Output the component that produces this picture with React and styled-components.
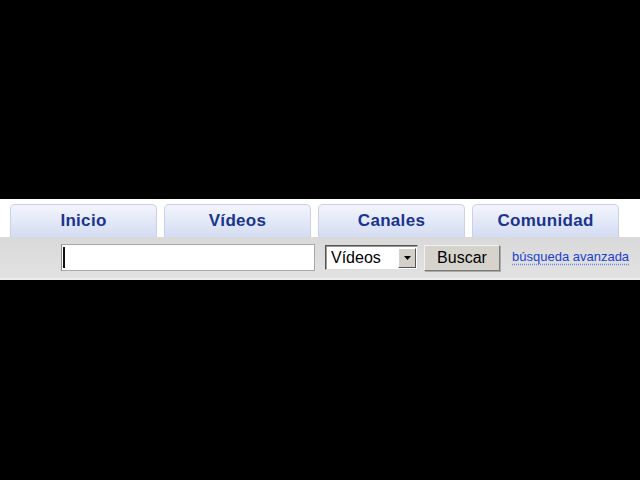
import styled, { createGlobalStyle } from "styled-components";

const GlobalStyle = createGlobalStyle`
  html, body {
    margin: 0;
    padding: 0;
    background: #000;
  }
  body {
    font-family: "Liberation Sans", Arial, sans-serif;
  }
`;

const Page = styled.div`
  width: 640px;
  height: 480px;
  background: #000;
  padding-top: 199px;
  box-sizing: border-box;
`;

const Header = styled.div`
  background: #fff;
  display: flex;
  flex-direction: column;
`;

const TabRow = styled.div`
  display: flex;
  gap: 7px;
  padding: 5px 0 0 10px;
  height: 38px;
  box-sizing: border-box;
`;

const Tab = styled.a`
  width: 147px;
  height: 33px;
  box-sizing: border-box;
  border: 1px solid #c9d1ea;
  border-bottom: none;
  border-radius: 5px 5px 0 0;
  background: linear-gradient(#f3f5fc, #d4dcf3);
  display: flex;
  align-items: center;
  justify-content: center;
  padding-bottom: 1px;
  font-weight: bold;
  font-size: 17px;
  letter-spacing: 0.3px;
  color: #19348f;
  text-decoration: none;
`;

const SearchBar = styled.div`
  height: 41px;
  background: linear-gradient(#d9d9d9, #e2e2e2);
  border-bottom: 2px solid #ececec;
  display: flex;
  align-items: center;
  padding-left: 61px;
  box-sizing: content-box;
`;

const Field = styled.div`
  width: 254px;
  height: 27px;
  box-sizing: border-box;
  background: #fff;
  border: 1px solid #a9a9a9;
  border-left-color: #8a8a8a;
  display: flex;
  align-items: center;
  padding-left: 1px;
`;

const Caret = styled.span`
  width: 2px;
  height: 21px;
  background: #111;
`;

const Select = styled.div`
  margin-left: 10px;
  width: 93px;
  height: 25px;
  box-sizing: border-box;
  background: #fff;
  border: 1px solid;
  border-color: #555 #dcdcdc #dcdcdc #555;
  box-shadow: inset 1px 1px 0 #999;
  display: flex;
  align-items: center;
  justify-content: space-between;
  padding: 0 1px 0 5px;
  font-size: 16px;
  color: #000;
`;

const Arrow = styled.span`
  width: 18px;
  height: 20px;
  box-sizing: border-box;
  background: #d4d0c8;
  border: 1px solid;
  border-color: #fff #555 #555 #fff;
  display: flex;
  align-items: center;
  justify-content: center;
`;

const Button = styled.button`
  margin-left: 6px;
  width: 76px;
  height: 26px;
  background: #d6d3cc;
  border: 1px solid;
  border-color: #f2f2f2 #7a7a7a #7a7a7a #f2f2f2;
  box-shadow: 1px 1px 0 #aaa;
  font-family: "Liberation Sans", Arial, sans-serif;
  font-size: 16px;
  color: #000;
  padding: 0;
`;

const Advanced = styled.a`
  margin-left: 12px;
  font-size: 13px;
  color: #1a3dd2;
  text-decoration: underline dotted #6f86e0;
  text-underline-offset: 3px;
  margin-bottom: 2px;
`;

export default function App() {
  return (
    <Page>
      <GlobalStyle />
      <Header>
        <TabRow>
          <Tab>Inicio</Tab>
          <Tab>Vídeos</Tab>
          <Tab>Canales</Tab>
          <Tab>Comunidad</Tab>
        </TabRow>
        <SearchBar>
          <Field>
            <Caret />
          </Field>
          <Select>
            Vídeos
            <Arrow>
              <svg width="7" height="4" viewBox="0 0 7 4">
                <path d="M0 0h7L3.5 4z" fill="#000" />
              </svg>
            </Arrow>
          </Select>
          <Button>Buscar</Button>
          <Advanced>búsqueda avanzada</Advanced>
        </SearchBar>
      </Header>
    </Page>
  );
}
